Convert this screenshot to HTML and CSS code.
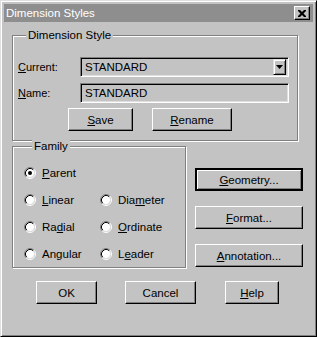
FILE: index.html
```html
<!DOCTYPE html>
<html lang="en">
<head>
    <meta charset="UTF-8">
    <title>Dimension Styles</title>
    <link rel="stylesheet" href="styles.css">
</head>
<body>

<div class="window">
    <div class="titlebar">
        <span class="title">Dimension Styles</span>
        <span class="close-btn">
            <svg width="8" height="7" viewBox="0 0 8 7"><path d="M0 0h2l2 2 2-2h2v1l-2.5 2.5L8 6v1H6L4 5 2 7H0V6l2.5-2.5L0 1z" fill="#000"/></svg>
        </span>
    </div>

    <div class="content">
        <fieldset class="group style-group">
            <legend>Dimension Style</legend>
            <div class="row">
                <label class="field-label"><u>C</u>urrent:</label>
                <div class="combo">
                    <span class="combo-text">STANDARD</span>
                    <span class="combo-arrow">
                        <svg width="7" height="4" viewBox="0 0 7 4"><path d="M0 0h7L3.5 4z" fill="#000"/></svg>
                    </span>
                </div>
            </div>
            <div class="row">
                <label class="field-label"><u>N</u>ame:</label>
                <div class="textbox">STANDARD</div>
            </div>
            <div class="btn-row">
                <button class="btn btn-save"><u>S</u>ave</button>
                <button class="btn btn-rename"><u>R</u>ename</button>
            </div>
        </fieldset>

        <div class="middle">
            <fieldset class="group family-group">
                <legend>Family</legend>
                <div class="radios">
                    <div class="radio">
                        <svg width="12" height="12" viewBox="0 0 12 12"><circle cx="6" cy="6" r="4.2" fill="#fff"/><path d="M2.11 9.89A5.5 5.5 0 0 1 9.89 2.11" fill="none" stroke="#808080"/><path d="M2.82 9.18A4.5 4.5 0 0 1 9.18 2.82" fill="none" stroke="#000"/><path d="M9.89 2.11A5.5 5.5 0 0 1 2.11 9.89" fill="none" stroke="#fff"/><path d="M9.18 2.82A4.5 4.5 0 0 1 2.82 9.18" fill="none" stroke="#dfdfdf"/><circle cx="6" cy="6" r="2" fill="#000"/></svg>
                        <span><u>P</u>arent</span>
                    </div>
                    <div></div>
                    <div class="radio">
                        <svg width="12" height="12" viewBox="0 0 12 12"><circle cx="6" cy="6" r="4.2" fill="#fff"/><path d="M2.11 9.89A5.5 5.5 0 0 1 9.89 2.11" fill="none" stroke="#808080"/><path d="M2.82 9.18A4.5 4.5 0 0 1 9.18 2.82" fill="none" stroke="#000"/><path d="M9.89 2.11A5.5 5.5 0 0 1 2.11 9.89" fill="none" stroke="#fff"/><path d="M9.18 2.82A4.5 4.5 0 0 1 2.82 9.18" fill="none" stroke="#dfdfdf"/></svg>
                        <span><u>L</u>inear</span>
                    </div>
                    <div class="radio">
                        <svg width="12" height="12" viewBox="0 0 12 12"><circle cx="6" cy="6" r="4.2" fill="#fff"/><path d="M2.11 9.89A5.5 5.5 0 0 1 9.89 2.11" fill="none" stroke="#808080"/><path d="M2.82 9.18A4.5 4.5 0 0 1 9.18 2.82" fill="none" stroke="#000"/><path d="M9.89 2.11A5.5 5.5 0 0 1 2.11 9.89" fill="none" stroke="#fff"/><path d="M9.18 2.82A4.5 4.5 0 0 1 2.82 9.18" fill="none" stroke="#dfdfdf"/></svg>
                        <span>Dia<u>m</u>eter</span>
                    </div>
                    <div class="radio">
                        <svg width="12" height="12" viewBox="0 0 12 12"><circle cx="6" cy="6" r="4.2" fill="#fff"/><path d="M2.11 9.89A5.5 5.5 0 0 1 9.89 2.11" fill="none" stroke="#808080"/><path d="M2.82 9.18A4.5 4.5 0 0 1 9.18 2.82" fill="none" stroke="#000"/><path d="M9.89 2.11A5.5 5.5 0 0 1 2.11 9.89" fill="none" stroke="#fff"/><path d="M9.18 2.82A4.5 4.5 0 0 1 2.82 9.18" fill="none" stroke="#dfdfdf"/></svg>
                        <span>Ra<u>d</u>ial</span>
                    </div>
                    <div class="radio">
                        <svg width="12" height="12" viewBox="0 0 12 12"><circle cx="6" cy="6" r="4.2" fill="#fff"/><path d="M2.11 9.89A5.5 5.5 0 0 1 9.89 2.11" fill="none" stroke="#808080"/><path d="M2.82 9.18A4.5 4.5 0 0 1 9.18 2.82" fill="none" stroke="#000"/><path d="M9.89 2.11A5.5 5.5 0 0 1 2.11 9.89" fill="none" stroke="#fff"/><path d="M9.18 2.82A4.5 4.5 0 0 1 2.82 9.18" fill="none" stroke="#dfdfdf"/></svg>
                        <span><u>O</u>rdinate</span>
                    </div>
                    <div class="radio">
                        <svg width="12" height="12" viewBox="0 0 12 12"><circle cx="6" cy="6" r="4.2" fill="#fff"/><path d="M2.11 9.89A5.5 5.5 0 0 1 9.89 2.11" fill="none" stroke="#808080"/><path d="M2.82 9.18A4.5 4.5 0 0 1 9.18 2.82" fill="none" stroke="#000"/><path d="M9.89 2.11A5.5 5.5 0 0 1 2.11 9.89" fill="none" stroke="#fff"/><path d="M9.18 2.82A4.5 4.5 0 0 1 2.82 9.18" fill="none" stroke="#dfdfdf"/></svg>
                        <span>An<u>g</u>ular</span>
                    </div>
                    <div class="radio">
                        <svg width="12" height="12" viewBox="0 0 12 12"><circle cx="6" cy="6" r="4.2" fill="#fff"/><path d="M2.11 9.89A5.5 5.5 0 0 1 9.89 2.11" fill="none" stroke="#808080"/><path d="M2.82 9.18A4.5 4.5 0 0 1 9.18 2.82" fill="none" stroke="#000"/><path d="M9.89 2.11A5.5 5.5 0 0 1 2.11 9.89" fill="none" stroke="#fff"/><path d="M9.18 2.82A4.5 4.5 0 0 1 2.82 9.18" fill="none" stroke="#dfdfdf"/></svg>
                        <span>L<u>e</u>ader</span>
                    </div>
                </div>
            </fieldset>

            <div class="side-buttons">
                <button class="btn btn-default"><u>G</u>eometry...</button>
                <button class="btn"><u>F</u>ormat...</button>
                <button class="btn"><u>A</u>nnotation...</button>
            </div>
        </div>

        <div class="bottom-buttons">
            <button class="btn btn-ok">OK</button>
            <button class="btn btn-cancel">Cancel</button>
            <button class="btn btn-help"><u>H</u>elp</button>
        </div>
    </div>
</div>

</body>
</html>
```

FILE: styles.css
```css
body {
    margin: 0;
    padding: 0;
    background: #c3c3c3;
    font-family: "Liberation Sans", Arial, sans-serif;
    font-size: 11px;
    color: #000;
}

.window {
    width: 317px;
    height: 337px;
    box-sizing: border-box;
    padding: 3px;
    background: #c3c3c3;
    border: 1px solid;
    border-color: #dfdfdf #000 #000 #dfdfdf;
    box-shadow: inset 1px 1px 0 #fff, inset -1px -1px 0 #808080;
}

.titlebar {
    height: 18px;
    display: flex;
    align-items: center;
    justify-content: space-between;
    padding: 0 3px 0 2px;
    background: #8e8e8e;
    color: #fff;
}

.title {
    font-size: 11.5px;
}

.close-btn {
    width: 16px;
    height: 14px;
    box-sizing: border-box;
    display: flex;
    align-items: center;
    justify-content: center;
    background: #c3c3c3;
    border: 1px solid;
    border-color: #fff #000 #000 #fff;
    box-shadow: inset -1px -1px 0 #808080;
}

.content {
    padding: 7px 0 0 8px;
}

/* group boxes */
.group {
    margin: 0;
    padding: 0;
    box-sizing: border-box;
    border: 1px solid #808080;
    box-shadow: inset 1px 1px 0 #fff, 1px 1px 0 #fff;
}

.group legend {
    margin-left: 8px;
    padding: 0 2px;
    line-height: 13px;
    font-size: 11.5px;
    background: #c3c3c3;
}

.style-group {
    width: 286px;
    padding: 15px 0 9px 5px;
}

.row {
    display: flex;
    align-items: center;
    height: 20px;
    margin-bottom: 6px;
}

.field-label {
    width: 62px;
}

.combo,
.textbox {
    width: 209px;
    height: 20px;
    box-sizing: border-box;
    border: 1px solid;
    border-color: #808080 #fff #fff #808080;
    box-shadow: inset 1px 1px 0 #000, inset -1px -1px 0 #dfdfdf;
    display: flex;
    align-items: center;
    padding-left: 4px;
    font-size: 11.5px;
}

.combo {
    justify-content: space-between;
    padding-right: 2px;
}

.combo-arrow {
    width: 13px;
    height: 16px;
    box-sizing: border-box;
    display: flex;
    align-items: center;
    justify-content: center;
    border: 1px solid;
    border-color: #dfdfdf #000 #000 #dfdfdf;
    box-shadow: inset 1px 1px 0 #fff, inset -1px -1px 0 #808080;
}

.btn-row {
    display: flex;
    gap: 19px;
    margin-left: 50px;
    margin-top: -1px;
}

/* buttons */
.btn {
    height: 23px;
    box-sizing: border-box;
    padding: 0;
    font-family: inherit;
    font-size: 11.5px;
    color: #000;
    background: #c3c3c3;
    border: 1px solid;
    border-color: #fff #000 #000 #fff;
    box-shadow: inset -1px -1px 0 #808080;
}

.btn-default {
    border: 2px solid #000;
    box-shadow: inset 1px 1px 0 #fff, inset -1px -1px 0 #808080;
}

.btn-save { width: 65px; }
.btn-rename { width: 80px; }

.middle {
    display: flex;
    margin-top: -1px;
}

.family-group {
    width: 174px;
    height: 128px;
    padding: 6px 0 0 11px;
}

.radios {
    display: grid;
    grid-template-columns: 76px auto;
    grid-auto-rows: 27px;
    align-items: center;
}

.radio {
    display: flex;
    align-items: center;
    gap: 6px;
    font-size: 11.5px;
}

.side-buttons {
    display: flex;
    flex-direction: column;
    gap: 15px;
    margin-left: 9px;
    padding-top: 28px;
}

.side-buttons .btn {
    width: 108px;
}

.bottom-buttons {
    display: flex;
    margin-top: 13px;
    margin-left: 24px;
}

.btn-ok { width: 61px; }
.btn-cancel { width: 71px; margin-left: 28px; }
.btn-help { width: 54px; margin-left: 29px; }
```
